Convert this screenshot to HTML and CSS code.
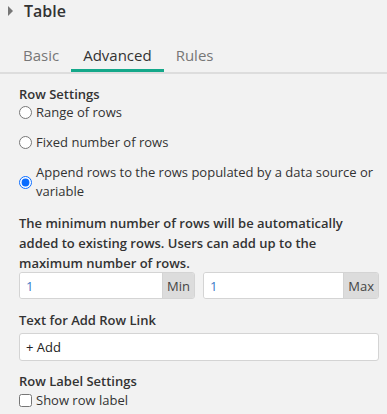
FILE: index.html
```html
<!DOCTYPE html>
<html lang="en">
<head>
  <meta charset="UTF-8">
  <title>Table settings</title>
  <link rel="stylesheet" href="styles.css">
</head>
<body>
  <div class="panel">
    <!-- セクション見出し -->
    <div class="section-head">
      <span class="caret"></span>
      <span class="section-title">Table</span>
    </div>

    <!-- タブ -->
    <div class="tabs">
      <span class="tab">Basic</span>
      <span class="tab active">Advanced</span>
      <span class="tab">Rules</span>
    </div>

    <div class="tab-body">
      <div class="group-label">Row Settings</div>
      <label class="radio-row"><input type="radio" name="rows"> Range of rows</label>
      <label class="radio-row"><input type="radio" name="rows"> Fixed number of rows</label>
      <label class="radio-row multi"><input type="radio" name="rows" checked> <span>Append rows to the rows populated by a data source or variable</span></label>

      <p class="note">The minimum number of rows will be automatically added to existing rows. Users can add up to the maximum number of rows.</p>

      <div class="min-max">
        <div class="input-group">
          <input type="text" value="1">
          <span class="addon">Min</span>
        </div>
        <div class="input-group">
          <input type="text" value="1">
          <span class="addon">Max</span>
        </div>
      </div>

      <div class="group-label">Text for Add Row Link</div>
      <input class="text-field" type="text" value="+ Add">

      <div class="group-label">Row Label Settings</div>
      <label class="check-row"><input type="checkbox"> Show row label</label>
    </div>
  </div>
</body>
</html>
```

FILE: styles.css
```css
* { margin: 0; padding: 0; box-sizing: border-box; }

html, body {
  background: #f2f2f2;
  color: #222;
  font-family: "Open Sans", "Noto Sans", sans-serif;
  font-size: 13px;
}

.panel {
  width: 387px;
  height: 414px;
  overflow: hidden;
}

/* 見出し */
.section-head {
  display: flex;
  align-items: center;
  height: 22px;
  padding-left: 8px;
}

.caret {
  width: 0;
  height: 0;
  border-top: 5px solid transparent;
  border-bottom: 5px solid transparent;
  border-left: 5px solid #777;
  margin-right: 11px;
}

.section-title {
  font-size: 16px;
  font-weight: 600;
  color: #333;
}

/* タブ */
.tabs {
  display: flex;
  margin-top: 20px;
  padding-left: 11px;
  border-bottom: 2px solid #ddd;
  height: 32px;
}

.tab {
  padding: 3px 12px 0;
  font-size: 15px;
  color: #777;
}

.tab.active {
  color: #333;
  border-bottom: 3px solid #14a88a;
}

/* 本文 */
.tab-body {
  padding: 11px 8px 0 19px;
}

.group-label {
  font-weight: 600;
  color: #333;
  line-height: 18px;
}

.radio-row,
.check-row {
  display: flex;
  align-items: center;
  gap: 4px;
  line-height: 18px;
  color: #333;
}

.radio-row { margin-bottom: 12px; }

.radio-row.multi {
  line-height: 19px;
  margin-top: 8px;
}

.radio-row input,
.check-row input {
  width: 13px;
  height: 13px;
  margin: 0;
  flex: none;
  accent-color: #0a6cff;
}

.note {
  margin-top: 1px;
  font-weight: 600;
  color: #333;
  line-height: 20px;
}

.min-max {
  display: flex;
  gap: 8px;
  margin: -1px 0 12px;
}

.input-group {
  flex: 1;
  display: flex;
  height: 27px;
  border: 1px solid #d4d4d4;
  border-radius: 3px;
  overflow: hidden;
}

.input-group input {
  flex: 1;
  min-width: 0;
  border: none;
  background: #fff;
  padding: 0 6px;
  font: inherit;
  color: #3a7bc8;
}

.addon {
  display: flex;
  align-items: center;
  padding: 0 4px;
  background: #dcdcdc;
  border-left: 1px solid #d4d4d4;
  color: #444;
}

.text-field {
  display: block;
  width: 100%;
  height: 28px;
  margin: 4px 0 11px;
  border: 1px solid #d4d4d4;
  border-radius: 3px;
  background: #fff;
  padding: 0 6px;
  font: inherit;
  color: #222;
}

.check-row { margin-top: 1px; }
```
